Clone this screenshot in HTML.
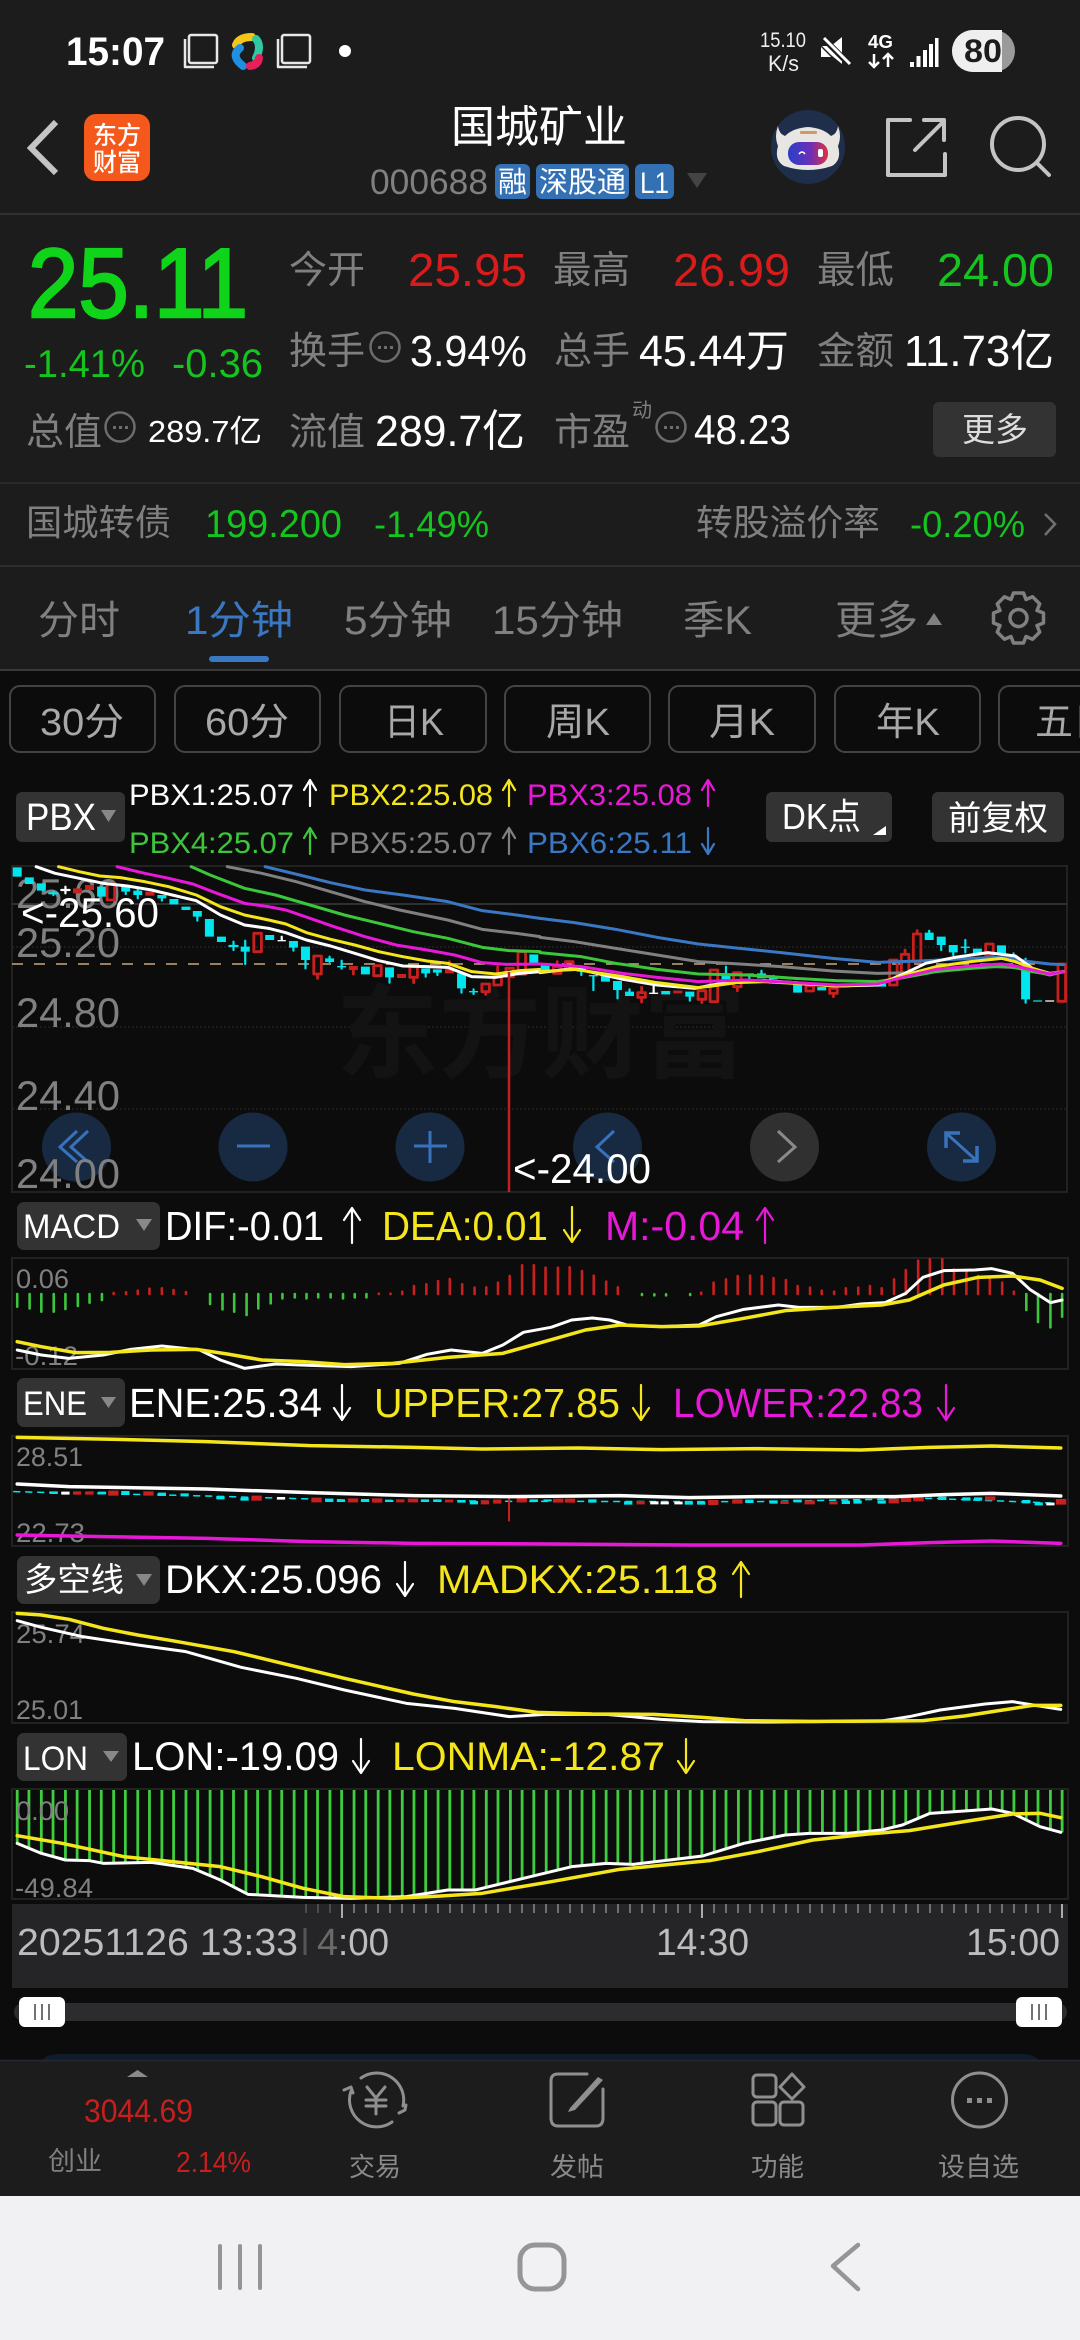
<!DOCTYPE html>
<html lang="zh"><head><meta charset="utf-8"><title>国城矿业</title>
<style>
html,body{margin:0;padding:0;background:#0c0c0c;width:1080px;height:2340px;overflow:hidden}
svg{display:block;font-family:"Liberation Sans","Noto Sans CJK SC",sans-serif}
text{white-space:pre}
.ns{vector-effect:non-scaling-stroke;fill:none;stroke-linejoin:round;stroke-linecap:round}
.a{fill:none;stroke-width:2.2;stroke-linecap:round;stroke-linejoin:round}
.ic{fill:none;stroke:#8f8f8f;stroke-width:3;stroke-linecap:round;stroke-linejoin:round}
</style></head><body>
<svg xmlns="http://www.w3.org/2000/svg" width="1080" height="2340" viewBox="0 0 1080 2340">
<defs><linearGradient id="vis" x1="0" x2="1"><stop offset="0" stop-color="#2a3fc8"/><stop offset=".55" stop-color="#6a2fb8"/><stop offset="1" stop-color="#e03040"/></linearGradient></defs>
<rect width="1080" height="670" fill="#1c1c1c"/>
<rect y="670" width="1080" height="1390" fill="#0c0c0c"/>
<!-- status bar -->
<text x="66" y="65" font-size="40" font-weight="700" fill="#fff" textLength="99" lengthAdjust="spacingAndGlyphs">15:07</text>
<g fill="none" stroke="#e8e8e8" stroke-width="2.500" stroke-linejoin="round"><rect x="189" y="35" width="28" height="28" rx="2"/><path d="M185 39V67H214"/><rect x="282" y="35" width="28" height="28" rx="2"/><path d="M278 39V67H307"/></g>
<g fill="none" stroke-width="8" stroke-linecap="round"><path d="M236 45Q239 37 252 37" stroke="#f5c518"/><path d="M256 39Q262 46 256 58" stroke="#2fc8a0"/><path d="M240 48Q230 56 243 66" stroke="#1f8fe0"/><path d="M250 66Q258 65 259 58" stroke="#e8205a"/></g>
<circle cx="345" cy="51" r="6" fill="#fff"/>
<text x="760" y="47" font-size="21" fill="#eee" textLength="46" lengthAdjust="spacingAndGlyphs">15.10</text>
<text x="768" y="71" font-size="22" fill="#eee" textLength="31" lengthAdjust="spacingAndGlyphs">K/s</text>
<path d="M822 46h9l11-9v27l-11-9z M821 47v10h10z" fill="#fff"/><path d="M824 39L849 64" stroke="#1c1c1c" stroke-width="6"/><path d="M824 38L850 64" stroke="#fff" stroke-width="3"/>
<text x="868" y="48" font-size="18" font-weight="700" fill="#fff" textLength="25" lengthAdjust="spacingAndGlyphs">4G</text>
<path d="M874 54V67M869 62L874 67L879 62M888 67V54M883 59L888 54L893 59" fill="none" stroke="#fff" stroke-width="2.500"/>
<path d="M910 62h4v5h-4zM916.500 56h4v11h-4zM923 50h4v17h-4zM929 44h4v23h-4zM935 38h3.500v29h-3.500z" fill="#fff"/>
<rect x="952" y="30" width="63" height="42" rx="21" fill="#9a9a9a"/><path d="M973 30H1002V72H973A21 21 0 0 1 973 30Z" fill="#efefef"/>
<text x="964" y="62" font-size="32" font-weight="700" fill="#1c1c1c" textLength="38" lengthAdjust="spacingAndGlyphs">80</text>
<!-- nav -->
<path d="M56 122L31 148L56 173" fill="none" stroke="#c4c4c4" stroke-width="6"/>
<rect x="84" y="114" width="66" height="67" rx="12" fill="#f4581a"/>
<text x="93" y="144" font-size="25" font-weight="500" fill="#fff" textLength="48" lengthAdjust="spacingAndGlyphs">东方</text>
<text x="93" y="171" font-size="25" font-weight="500" fill="#fff" textLength="48" lengthAdjust="spacingAndGlyphs">财富</text>
<text x="451" y="142" font-size="44" fill="#fff" textLength="176" lengthAdjust="spacingAndGlyphs">国城矿业</text>
<text x="370" y="194" font-size="35" fill="#808080" textLength="118" lengthAdjust="spacingAndGlyphs">000688</text>
<rect x="495" y="164" width="35" height="35" rx="6" fill="#3470b4"/><rect x="536" y="164" width="93" height="35" rx="6" fill="#3470b4"/><rect x="635" y="164" width="39" height="35" rx="6" fill="#3470b4"/>
<text x="498" y="192" font-size="29" fill="#fff" textLength="29" lengthAdjust="spacingAndGlyphs">融</text>
<text x="539" y="192" font-size="29" fill="#fff" textLength="87" lengthAdjust="spacingAndGlyphs">深股通</text>
<text x="640" y="193" font-size="30" fill="#fff" textLength="29" lengthAdjust="spacingAndGlyphs">L1</text>
<path d="M687 173H707L697 188Z" fill="#444"/>
<circle cx="808" cy="147" r="37" fill="#1f2e4a"/>
<path d="M778 126Q779 134 785 136Q793 128 808 127Q823 128 831 136Q837 134 838 126Q842 136 838 146Q842 160 832 166Q808 174 784 166Q774 160 778 146Q774 136 778 126Z" fill="#e8e6e2"/>
<rect x="788" y="142" width="40" height="23" rx="11" fill="url(#vis)"/><path d="M799 154q3-4 6 0" fill="none" stroke="#fff" stroke-width="1.500"/><rect x="818" y="149" width="5" height="8" rx="2" fill="#fff"/>
<rect x="800" y="131" width="17" height="3" rx="1" fill="#d09a60"/>
<path d="M910 120H888V175H945V154M915 150L943 122M924 120H944V140" fill="none" stroke="#c4c4c4" stroke-width="4" stroke-linecap="round" stroke-linejoin="round"/>
<circle cx="1018" cy="144" r="26" fill="none" stroke="#c4c4c4" stroke-width="4"/><path d="M1037 163L1049 175" stroke="#c4c4c4" stroke-width="4" stroke-linecap="round"/>
<path d="M0 214H1080" stroke="#303030" stroke-width="2"/>
<!-- quote -->
<text x="28" y="317" font-size="98" fill="#0fd41a" stroke="#0fd41a" stroke-width="2.500" textLength="220" lengthAdjust="spacingAndGlyphs">25.11</text>
<text x="24" y="377" font-size="39" fill="#15c41e" textLength="121" lengthAdjust="spacingAndGlyphs">-1.41%</text>
<text x="172" y="377" font-size="40" fill="#15c41e" textLength="91" lengthAdjust="spacingAndGlyphs">-0.36</text>
<g font-size="38" fill="#808080">
<text x="289" y="283" textLength="76" lengthAdjust="spacingAndGlyphs">今开</text><text x="553" y="283" textLength="77" lengthAdjust="spacingAndGlyphs">最高</text><text x="817" y="283" textLength="77" lengthAdjust="spacingAndGlyphs">最低</text>
<text x="289" y="364" textLength="76" lengthAdjust="spacingAndGlyphs">换手</text><text x="554" y="364" textLength="76" lengthAdjust="spacingAndGlyphs">总手</text><text x="817" y="364" textLength="77" lengthAdjust="spacingAndGlyphs">金额</text>
<text x="26" y="445" textLength="76" lengthAdjust="spacingAndGlyphs">总值</text><text x="289" y="445" textLength="76" lengthAdjust="spacingAndGlyphs">流值</text><text x="554" y="445" textLength="76" lengthAdjust="spacingAndGlyphs">市盈</text></g>
<g font-size="46"><text x="408" y="286" fill="#d81c1c" textLength="119" lengthAdjust="spacingAndGlyphs">25.95</text><text x="673" y="286" fill="#d81c1c" textLength="117" lengthAdjust="spacingAndGlyphs">26.99</text><text x="937" y="286" fill="#15c41e" textLength="117" lengthAdjust="spacingAndGlyphs">24.00</text></g>
<g font-size="44" fill="#fff"><text x="410" y="366" textLength="117" lengthAdjust="spacingAndGlyphs">3.94%</text><text x="639" y="366" textLength="150" lengthAdjust="spacingAndGlyphs">45.44万</text><text x="904" y="366" textLength="150" lengthAdjust="spacingAndGlyphs">11.73亿</text>
<text x="375" y="446" textLength="150" lengthAdjust="spacingAndGlyphs">289.7亿</text><text x="694" y="444" font-size="42" textLength="97" lengthAdjust="spacingAndGlyphs">48.23</text><text x="148" y="442" font-size="31" textLength="114" lengthAdjust="spacingAndGlyphs">289.7亿</text></g>
<g fill="none" stroke="#6c6c6c" stroke-width="2.500"><circle cx="385" cy="347" r="14.500"/><circle cx="120" cy="427" r="14.500"/><circle cx="671" cy="427" r="14.500"/></g>
<g fill="#6c6c6c"><path d="M378 346h3v3h-3zM384 346h3v3h-3zM390 346h3v3h-3zM113 426h3v3h-3zM119 426h3v3h-3zM125 426h3v3h-3zM664 426h3v3h-3zM670 426h3v3h-3zM676 426h3v3h-3z"/></g>
<text x="632" y="417" font-size="20" fill="#808080">动</text>
<rect x="933" y="402" width="123" height="55" rx="6" fill="#333"/>
<text x="962" y="441" font-size="33" fill="#ddd" textLength="66" lengthAdjust="spacingAndGlyphs">更多</text>
<path d="M0 483H1080" stroke="#2a2a2a" stroke-width="2"/>
<text x="26" y="535" font-size="36" fill="#808080" textLength="145" lengthAdjust="spacingAndGlyphs">国城转债</text>
<text x="205" y="537" font-size="39" fill="#15c41e" textLength="137" lengthAdjust="spacingAndGlyphs">199.200</text>
<text x="374" y="537" font-size="37" fill="#15c41e" textLength="115" lengthAdjust="spacingAndGlyphs">-1.49%</text>
<text x="696" y="535" font-size="36" fill="#808080" textLength="184" lengthAdjust="spacingAndGlyphs">转股溢价率</text>
<text x="910" y="537" font-size="37" fill="#15c41e" textLength="115" lengthAdjust="spacingAndGlyphs">-0.20%</text>
<path d="M1045 514L1055 524L1045 535" fill="none" stroke="#707070" stroke-width="2.500"/>
<path d="M0 566H1080" stroke="#2e2e2e" stroke-width="2"/>
<!-- tabs -->
<g font-size="40" fill="#808080"><text x="38" y="634" textLength="82" lengthAdjust="spacingAndGlyphs">分时</text>
<text x="185" y="634" fill="#3a78c4" textLength="108" lengthAdjust="spacingAndGlyphs">1分钟</text>
<text x="344" y="634" textLength="108" lengthAdjust="spacingAndGlyphs">5分钟</text><text x="492" y="634" textLength="131" lengthAdjust="spacingAndGlyphs">15分钟</text><text x="683" y="634" textLength="69" lengthAdjust="spacingAndGlyphs">季K</text><text x="835" y="634" textLength="83" lengthAdjust="spacingAndGlyphs">更多</text></g>
<path d="M926 625L934 613L942 625Z" fill="#808080"/>
<g transform="translate(1018.500 618)"><path d="M-5-25L5-25L7.500-18.500L14.100-21.200L21.200-14.100L18.500-7.500L25-5L25 5L18.500 7.500L21.200 14.100L14.100 21.200L7.500 18.500L5 25L-5 25L-7.500 18.500L-14.100 21.200L-21.200 14.100L-18.500 7.500L-25 5L-25-5L-18.500-7.500L-21.200-14.100L-14.100-21.200L-7.500-18.500Z" fill="none" stroke="#808080" stroke-width="3.500" stroke-linejoin="round"/><circle r="8.500" fill="none" stroke="#808080" stroke-width="3.500"/></g>
<rect x="209" y="656" width="60" height="6" rx="3" fill="#3a78c4"/>
<path d="M0 670H1080" stroke="#3a3a3a" stroke-width="2"/>
<!-- period buttons -->
<g fill="none" stroke="#444" stroke-width="2"><rect x="10" y="686" width="145" height="66" rx="10"/><rect x="175" y="686" width="145" height="66" rx="10"/><rect x="340" y="686" width="146" height="66" rx="10"/><rect x="505" y="686" width="145" height="66" rx="10"/><rect x="669" y="686" width="146" height="66" rx="10"/><rect x="835" y="686" width="145" height="66" rx="10"/><rect x="999" y="686" width="146" height="66" rx="10"/></g>
<g font-size="38" fill="#a8a8a8"><text x="40" y="735" textLength="84" lengthAdjust="spacingAndGlyphs">30分</text><text x="205" y="735" textLength="84" lengthAdjust="spacingAndGlyphs">60分</text><text x="384" y="735" textLength="60" lengthAdjust="spacingAndGlyphs">日K</text><text x="546" y="735" textLength="64" lengthAdjust="spacingAndGlyphs">周K</text><text x="709" y="735" textLength="66" lengthAdjust="spacingAndGlyphs">月K</text><text x="876" y="735" textLength="64" lengthAdjust="spacingAndGlyphs">年K</text><text x="1035" y="735">五日</text></g>
<!-- PBX header -->
<rect x="16" y="792" width="109" height="50" rx="6" fill="#333"/>
<text x="26" y="830" font-size="38" fill="#fff" textLength="70" lengthAdjust="spacingAndGlyphs">PBX</text>
<path d="M101 810H116L108.500 822Z" fill="#888"/>
<g font-size="30"><text x="129" y="805" fill="#fff" textLength="165" lengthAdjust="spacingAndGlyphs">PBX1:25.07</text><text x="329" y="805" fill="#f5e61c" textLength="164" lengthAdjust="spacingAndGlyphs">PBX2:25.08</text><text x="527" y="805" fill="#e818d8" textLength="165" lengthAdjust="spacingAndGlyphs">PBX3:25.08</text>
<text x="129" y="853" fill="#3cc63c" textLength="165" lengthAdjust="spacingAndGlyphs">PBX4:25.07</text><text x="329" y="853" fill="#808080" textLength="164" lengthAdjust="spacingAndGlyphs">PBX5:25.07</text><text x="527" y="853" fill="#3a78c4" textLength="165" lengthAdjust="spacingAndGlyphs">PBX6:25.11</text></g>
<path class="a" stroke="#fff" d="M310 806V780M304 790L310 780L316 790"/><path class="a" stroke="#f5e61c" d="M509 806V780M503 790L509 780L515 790"/><path class="a" stroke="#e818d8" d="M708 806V780M702 790L708 780L714 790"/>
<path class="a" stroke="#3cc63c" d="M310 854V828M304 838L310 828L316 838"/><path class="a" stroke="#808080" d="M509 854V828M503 838L509 828L515 838"/><path class="a" stroke="#3a78c4" d="M708 828V854M702 844L708 854L714 844"/>
<rect x="766" y="792" width="126" height="50" rx="6" fill="#333"/><text x="782" y="829" font-size="36" fill="#fff" textLength="79" lengthAdjust="spacingAndGlyphs">DK点</text><path d="M886 826V835H873Z" fill="#fff"/>
<rect x="932" y="792" width="132" height="50" rx="6" fill="#333"/><text x="948" y="830" font-size="34" fill="#fff" textLength="100" lengthAdjust="spacingAndGlyphs">前复权</text>
<!-- main chart -->
<rect x="12" y="866" width="1055" height="326" fill="none" stroke="#222" stroke-width="2"/>
<path d="M12 904H1067" stroke="#303030" stroke-width="2"/>
<path d="M12 947H1067M12 1027H1067M12 1109H1067" stroke="#2c2c2c" stroke-width="1" stroke-dasharray="2 2"/>
<path d="M12 964H1067" stroke="#c8a67c" stroke-width="1.500" stroke-dasharray="11 11"/>
<text x="336" y="1070" font-size="102" font-weight="700" fill="#131313" textLength="410" lengthAdjust="spacingAndGlyphs">东方财富</text>
<g font-size="42" fill="#808080"><text x="16" y="908" textLength="104" lengthAdjust="spacingAndGlyphs">25.60</text><text x="16" y="957" textLength="104" lengthAdjust="spacingAndGlyphs">25.20</text><text x="16" y="1027" textLength="104" lengthAdjust="spacingAndGlyphs">24.80</text><text x="16" y="1110" textLength="104" lengthAdjust="spacingAndGlyphs">24.40</text></g>
<g transform="matrix(.3444 0 0 .33333 0 860)">
<path fill="#00e6ee" d="M37 22h26v28h-26zM72 52h26v20h-26zM107 70h26v22h-26zM282 80h26v30h-26zM352 80h26v15h-26zM387 92h26v13h-26zM457 105h26v10h-26zM492 117h26v16h-26zM527 140h26v10h-26zM560 153h26v17h-26zM595 177h26v53h-26zM630 230h26v16h-26zM699 260h26v15h-26zM770 225h26v15h-26zM839 243h26v20h-26zM874 260h26v40h-26zM944 295h26v11h-26zM979 318h26v4h-26zM1048 320h26v23h-26zM1118 322h26v30h-26zM1223 325h26v15h-26zM1257 328h26v10h-26zM1327 340h26v45h-26zM1362 393h26v4h-26zM1537 283h26v32h-26z"/>
<path class="ns" stroke="#00e6ee" stroke-width="2.200" d="M155 95V105M143 100h24M365 95V102M400 85V115M470 115V122M573 170V182M678 245V270M666 258h24M712 242V312M852 263V272M887 300V325M957 290V306M992 302V326M1131 352V368M1236 340V350M1270 338V345M1340 385V398M1375 388V402"/>
<path fill="#c8201f" d="M212 85h26v15h-26zM247 75h26v15h-26zM422 95h26v12h-26zM1013 318h26v12h-26zM1153 342h26v12h-26zM1292 322h26v18h-26z"/>
<path class="ns" stroke="#c8201f" stroke-width="2.800" d="M311 72h22v48h-22zM737 220h22v55h-22zM911 288h22v54h-22zM922 342V355M1026 330V342M1305 305V322M1085 317h22v30h-22zM1190 320h22v32h-22zM1201 352V368M1399 372h22v23h-22zM1410 395V403M1434 350h22v25h-22zM1445 320V350M1469 325h22v25h-22zM1504 275h22v68h-22z"/>
<path class="ns" stroke="#fff" stroke-width="2.200" d="M178 90h24M190 80V100M818 230V240"/><path fill="#fff" d="M806 240h24v4h-24z"/>
<polyline class="ns" stroke="#3a78c4" stroke-width="3" points="770,20 870,45 960,68 1060,90 1170,105 1300,125 1400,152 1500,165 1568,175"/>
<polyline class="ns" stroke="#808080" stroke-width="3" points="660,20 760,40 860,65 960,95 1060,125 1160,150 1300,180 1400,208 1500,220 1568,230"/>
<polyline class="ns" stroke="#3cc63c" stroke-width="3" points="555,20 610,45 710,85 800,105 900,135 1000,165 1100,190 1200,215 1300,235 1400,262 1480,272 1568,275"/>
<polyline class="ns" stroke="#e818d8" stroke-width="3" points="340,20 420,40 490,55 560,72 630,100 710,130 780,140 830,150 900,175 970,200 1060,230 1150,255 1240,270 1320,285 1400,308 1470,313 1568,312"/>
<polyline class="ns" stroke="#f5e61c" stroke-width="3" points="170,20 230,35 290,48 350,53 420,65 490,80 570,105 640,140 710,165 780,180 830,192 890,218 960,238 1030,255 1100,275 1170,290 1240,303 1300,310 1370,335 1440,342 1510,332 1568,328"/>
<polyline class="ns" stroke="#fff" stroke-width="3" points="105,20 160,40 230,55 300,70 370,78 440,90 500,105 570,122 640,165 710,195 780,205 830,218 890,240 960,258 1030,280 1100,302 1170,318 1240,320 1300,322 1370,350 1440,352 1510,340 1568,335"/>
</g>
<g transform="matrix(.3444 0 0 .33333 540 860)">
<path fill="#00e6ee" d="M2 310h26v20h-26zM107 320h26v15h-26zM142 345h26v4h-26zM177 345h26v20h-26zM212 363h26v27h-26zM247 395h26v13h-26zM352 393h26v10h-26zM422 395h26v15h-26zM527 342h26v16h-26zM595 340h26v5h-26zM630 340h26v15h-26zM665 353h26v5h-26zM735 373h26v25h-26zM805 381h26v10h-26zM979 370h26v10h-26zM1117 218h26v22h-26zM1152 230h26v25h-26zM1187 255h26v22h-26zM1222 260h26v4h-26zM1257 266h26v19h-26zM1327 256h26v26h-26zM1362 290h26v15h-26zM1397 330h26v88h-26zM1432 421h26v4h-26z"/>
<path class="ns" stroke="#00e6ee" stroke-width="2.200" d="M120 335V345M155 349V390M225 390V415M260 388V395M435 410V422M540 320V342M608 345V355M643 332V340M678 348V353M1130 212V218M1165 255V270M1200 277V285M1235 240V277M1375 280V290M1410 296V330M1410 418V428"/>
<path fill="#c8201f" d="M387 392h26v8h-26zM700 365h26v5h-26zM874 370h26v13h-26zM944 370h26v8h-26z"/>
<path class="ns" stroke="#c8201f" stroke-width="2.800" d="M39 320h22v20h-22zM50 305V320M74 305h22v25h-22zM284 398h22v14h-22zM295 382V398M295 412V426M459 392h22v26h-22zM470 418V428M494 330h22v95h-22zM562 338h22v42h-22zM573 380V392M772 378h22v15h-22zM841 385h22v15h-22zM852 400V410M1015 300h22v75h-22zM1049 283h22v62h-22zM1060 270V283M1084 222h22v83h-22zM1095 212V222M1294 252h22v33h-22zM1504 312h22v112h-22z"/>
<path class="ns" stroke="#fff" stroke-width="2.200" d="M330 375V398"/><path fill="#fff" d="M317 398h26v4h-26zM1467 421h26v4h-26z"/>
<polyline class="ns" stroke="#3a78c4" stroke-width="3" points="0,175 100,188 220,208 340,232 460,252 580,265 700,278 850,295 980,307 1100,303 1200,298 1320,292 1370,295 1420,305 1480,312 1520,314"/>
<polyline class="ns" stroke="#808080" stroke-width="3" points="0,232 100,245 220,265 340,285 460,305 580,312 700,320 850,333 980,340 1100,338 1200,328 1320,320 1370,322 1420,330 1480,345 1520,335"/>
<polyline class="ns" stroke="#3cc63c" stroke-width="3" points="0,278 120,290 220,310 340,328 460,342 600,345 740,355 860,362 980,365 1060,352 1150,335 1250,325 1340,318 1380,322 1430,335 1480,343 1520,335"/>
<polyline class="ns" stroke="#fff" stroke-width="3" points="0,338 100,325 240,358 340,375 450,385 500,375 570,365 650,362 740,368 860,378 980,375 1060,340 1120,310 1200,293 1300,278 1380,288 1430,325 1480,342 1520,335"/>
<polyline class="ns" stroke="#f5e61c" stroke-width="3" points="0,335 100,328 240,350 340,368 460,383 500,378 570,368 650,365 740,370 860,378 980,372 1060,345 1150,320 1250,305 1340,295 1380,305 1430,325 1480,340 1520,335"/>
<polyline class="ns" stroke="#e818d8" stroke-width="3" points="0,312 120,320 240,340 340,352 460,365 600,360 740,368 860,375 980,372 1060,350 1150,328 1250,318 1340,312 1380,318 1430,330 1480,342 1520,335"/>
</g>
<path d="M509 972V1192" stroke="#c02020" stroke-width="2.500"/>
<text x="21" y="927" font-size="42" fill="#fff" textLength="138" lengthAdjust="spacingAndGlyphs">&lt;-25.60</text>
<g fill="#172a42"><circle cx="76.500" cy="1147" r="34.500"/><circle cx="253" cy="1147" r="34.500"/><circle cx="430" cy="1147" r="34.500"/><circle cx="607.500" cy="1147" r="34.500"/><circle cx="961.500" cy="1147" r="34.500"/></g><circle cx="784.500" cy="1147" r="34.500" fill="#303030"/>
<g fill="none" stroke="#3872bd" stroke-width="3"><path d="M77 1131L60 1147L77 1162M88 1131L71 1147L88 1162"/><path d="M237 1146H270"/><path d="M414 1146H447M430 1131V1163"/><path d="M614 1131L597 1147L614 1162"/><path d="M946 1133L977 1161"/><path d="M946 1148V1133H960M977 1146V1161H963" stroke-width="3.500"/></g>
<path d="M778 1131L795 1147L778 1162" fill="none" stroke="#8a8a8a" stroke-width="3"/>
<text x="16" y="1188" font-size="42" fill="#808080" textLength="104" lengthAdjust="spacingAndGlyphs">24.00</text>
<text x="513" y="1183" font-size="42" fill="#fff" textLength="138" lengthAdjust="spacingAndGlyphs">&lt;-24.00</text>
<!-- MACD -->
<rect x="17" y="1202" width="143" height="48" rx="7" fill="#333"/><text x="23" y="1238" font-size="34" fill="#fff" textLength="97" lengthAdjust="spacingAndGlyphs">MACD</text><path d="M136 1219H152L144 1231Z" fill="#888"/>
<g font-size="41"><text x="165" y="1240" fill="#fff" textLength="159" lengthAdjust="spacingAndGlyphs">DIF:-0.01</text><text x="382" y="1240" fill="#f5e61c" textLength="166" lengthAdjust="spacingAndGlyphs">DEA:0.01</text><text x="605" y="1240" fill="#e818d8" textLength="139" lengthAdjust="spacingAndGlyphs">M:-0.04</text></g>
<path class="a" stroke="#fff" d="M352 1243V1208M344 1220L352 1208L360 1220"/><path class="a" stroke="#f5e61c" d="M572 1207V1242M564 1230L572 1242L580 1230"/><path class="a" stroke="#e818d8" d="M765 1243V1208M757 1220L765 1208L773 1220"/>
<rect x="12" y="1258" width="1056" height="111" fill="none" stroke="#222" stroke-width="2"/>
<text x="16" y="1288" font-size="27" fill="#808080" textLength="53" lengthAdjust="spacingAndGlyphs">0.06</text>
<text x="15" y="1365" font-size="27" fill="#808080" textLength="63" lengthAdjust="spacingAndGlyphs">-0.12</text>
<g transform="matrix(.6888 0 0 .33333 0 1190)">
<path class="ns" stroke="#3cc63c" stroke-width="2.600" d="M25 312V350M43 312V355M60 312V365M78 312V365M95 312V357M113 312V348M130 312V338M148 312V330M305 312V342M323 312V358M340 312V365M358 312V375M375 312V355M393 312V340M410 312V325M428 312V322M445 312V325M462 312V322M480 312V322M498 312V325M515 312V322M532 312V322M932 312V315M950 313V316M967 313V316M1002 312V315M1490 312V360M1507 312V396M1525 312V412M1542 312V380"/>
<path class="ns" stroke="#c8201f" stroke-width="2.600" d="M165 312V309M183 312V307M200 312V302M217 312V296M235 312V295M252 312V300M270 312V306M550 312V311M567 312V311M584 312V305M601 312V288M619 312V283M636 312V273M653 312V267M671 312V283M689 312V293M706 312V292M723 312V278M740 312V258M758 312V226M775 312V226M792 312V233M810 312V233M827 312V232M845 312V243M862 312V257M880 312V275M897 312V292M1018 312V308M1036 312V278M1054 312V268M1071 312V258M1089 312V257M1106 312V258M1123 312V264M1141 312V270M1158 312V288M1176 312V293M1193 312V302M1211 312V305M1228 312V295M1246 312V293M1263 312V288M1280 312V295M1298 312V268M1315 312V240M1333 312V212M1350 312V208M1368 312V208M1385 312V238M1403 312V240M1420 312V258M1437 312V262M1455 312V278M1472 312V305"/>
<polyline class="ns" stroke="#fff" stroke-width="3" points="25,480 60,495 100,505 150,495 190,478 235,468 290,480 320,510 355,535 400,522 450,526 510,530 580,520 620,493 655,480 700,490 730,465 760,427 800,412 830,390 860,384 885,390 910,405 960,410 1015,405 1040,380 1080,358 1130,345 1160,352 1215,352 1250,342 1285,338 1315,310 1340,262 1370,242 1415,240 1440,236 1470,250 1495,298 1525,338 1542,330"/>
<polyline class="ns" stroke="#f5e61c" stroke-width="3.500" points="25,455 60,470 110,488 160,487 220,480 285,478 330,492 380,510 440,515 500,524 570,520 650,502 730,490 790,455 850,420 900,405 960,410 1015,408 1080,385 1140,362 1210,352 1280,345 1320,330 1370,285 1420,262 1470,258 1510,270 1542,295"/>
</g>
<!-- ENE -->
<rect x="17" y="1378" width="108" height="49" rx="7" fill="#333"/><text x="23" y="1415" font-size="34" fill="#fff" textLength="64" lengthAdjust="spacingAndGlyphs">ENE</text><path d="M101 1397H116L108.500 1408Z" fill="#888"/>
<g font-size="41"><text x="129" y="1417" fill="#fff" textLength="193" lengthAdjust="spacingAndGlyphs">ENE:25.34</text><text x="374" y="1417" fill="#f5e61c" textLength="246" lengthAdjust="spacingAndGlyphs">UPPER:27.85</text><text x="673" y="1417" fill="#e818d8" textLength="250" lengthAdjust="spacingAndGlyphs">LOWER:22.83</text></g>
<path class="a" stroke="#fff" d="M342 1385V1420M334 1408L342 1420L350 1408"/><path class="a" stroke="#f5e61c" d="M641 1385V1420M633 1408L641 1420L649 1408"/><path class="a" stroke="#e818d8" d="M946 1385V1420M938 1408L946 1420L954 1408"/>
<rect x="12" y="1436" width="1056" height="110" fill="none" stroke="#222" stroke-width="2"/>
<text x="16" y="1466" font-size="27" fill="#808080" textLength="67" lengthAdjust="spacingAndGlyphs">28.51</text>
<text x="16" y="1542" font-size="27" fill="#808080" textLength="69" lengthAdjust="spacingAndGlyphs">22.73</text>
<g transform="matrix(.6888 0 0 .33333 0 1190)">
<path class="ns" stroke="#00e6ee" stroke-width="1.500" stroke-dasharray="6 6" d="M20 905L300 918L500 930L740 934L1100 935L1350 925L1540 940"/>
<path fill="#00e6ee" d="M72 904h12v8h-12zM142 905h12v8h-12zM176 903h12v12h-12zM229 908h12v10h-12zM262 910h12v9h-12zM314 918h12v10h-12zM349 923h12v9h-12zM472 926h12v10h-12zM489 928h12v8h-12zM524 927h12v9h-12zM559 930h12v6h-12zM611 928h12v8h-12zM629 928h12v8h-12zM664 930h12v8h-12zM682 933h12v10h-12zM769 928h12v8h-12zM789 928h12v6h-12zM854 928h12v10h-12zM906 934h12v10h-12zM994 934h12v10h-12zM1012 934h12v10h-12zM1082 929h12v10h-12zM1117 931h12v10h-12zM1152 929h12v8h-12zM1222 932h12v10h-12zM1239 931h12v10h-12zM1274 931h12v10h-12zM1362 920h12v10h-12zM1397 922h12v10h-12zM1414 922h12v10h-12zM1484 930h12v10h-12zM1502 937h12v9h-12z"/>
<path fill="#c8201f" d="M106 904h12v10h-12zM124 904h12v10h-12zM157 902h15v15h-15zM208 904h15v13h-15zM365 917h15v15h-15zM452 923h15v14h-15zM505 925h15v12h-15zM540 925h15v13h-15zM575 928h12v9h-12zM592 926h15v11h-15zM646 929h12v8h-12zM698 931h12v12h-12zM716 929h12v12h-12zM750 924h15v13h-15zM803 926h15v12h-15zM820 926h15v12h-15zM924 933h12v10h-12zM1028 930h15v15h-15zM1063 928h15v13h-15zM1133 933h12v9h-12zM1168 931h15v12h-15zM1204 934h12v9h-12zM1290 926h15v14h-15zM1308 923h15v13h-15zM1326 916h15v18h-15zM1430 919h15v12h-15zM1533 927h15v17h-15z"/>
<path fill="#fff" d="M89 905h12v9h-12zM402 921h12v8h-12zM944 934h12v9h-12zM959 935h12v8h-12zM979 935h12v8h-12zM1519 938h12v8h-12z"/>
<path class="ns" stroke="#c8201f" stroke-width="2" d="M739 925V992"/>
<polyline class="ns" stroke="#f5e61c" stroke-width="3.500" points="25,742 170,748 300,755 450,767 600,772 700,777 840,774 960,779 1100,776 1250,780 1350,772 1440,768 1540,774"/>
<polyline class="ns" stroke="#fff" stroke-width="3.500" points="25,882 100,890 300,897 450,908 600,917 740,920 900,917 1000,923 1100,920 1300,920 1370,914 1440,910 1540,918"/>
<polyline class="ns" stroke="#e818d8" stroke-width="3.500" points="25,1035 150,1040 300,1045 450,1055 600,1060 800,1062 1000,1065 1250,1065 1350,1058 1440,1053 1540,1060"/>
</g>
<!-- DKX -->
<rect x="17" y="1556" width="143" height="48" rx="7" fill="#333"/><text x="24" y="1591" font-size="33" fill="#fff" textLength="100" lengthAdjust="spacingAndGlyphs">多空线</text><path d="M136 1574H152L144 1586Z" fill="#888"/>
<g font-size="40"><text x="165" y="1593" fill="#fff" textLength="217" lengthAdjust="spacingAndGlyphs">DKX:25.096</text><text x="437" y="1593" fill="#f5e61c" textLength="281" lengthAdjust="spacingAndGlyphs">MADKX:25.118</text></g>
<path class="a" stroke="#fff" d="M405 1562V1596M397 1584L405 1596L413 1584"/><path class="a" stroke="#f5e61c" d="M741 1597V1562M733 1574L741 1562L749 1574"/>
<rect x="12" y="1612" width="1056" height="111" fill="none" stroke="#222" stroke-width="2"/>
<text x="16" y="1643" font-size="27" fill="#808080" textLength="69" lengthAdjust="spacingAndGlyphs">25.74</text>
<text x="16" y="1719" font-size="27" fill="#808080" textLength="67" lengthAdjust="spacingAndGlyphs">25.01</text>
<g transform="matrix(.6888 0 0 .33333 0 1550)">
<polyline class="ns" stroke="#fff" stroke-width="3" points="25,212 60,232 120,260 200,285 270,305 350,352 430,385 500,420 590,460 660,475 740,500 790,493 880,493 960,508 1020,515 1120,516 1280,513 1320,500 1365,480 1430,462 1470,455 1500,465 1540,478"/>
<polyline class="ns" stroke="#f5e61c" stroke-width="3.500" points="25,190 60,195 100,208 150,235 200,255 250,272 340,305 400,335 500,385 600,432 660,455 720,470 780,487 860,492 950,493 1020,502 1080,512 1180,514 1280,513 1340,512 1400,498 1450,482 1500,466 1540,466"/>
</g>
<!-- LON -->
<rect x="17" y="1733" width="110" height="48" rx="7" fill="#333"/><text x="23" y="1770" font-size="34" fill="#fff" textLength="65" lengthAdjust="spacingAndGlyphs">LON</text><path d="M103 1751H119L111 1762Z" fill="#888"/>
<g font-size="40"><text x="132" y="1770" fill="#fff" textLength="207" lengthAdjust="spacingAndGlyphs">LON:-19.09</text><text x="392" y="1770" fill="#f5e61c" textLength="273" lengthAdjust="spacingAndGlyphs">LONMA:-12.87</text></g>
<path class="a" stroke="#fff" d="M361 1739V1773M353 1761L361 1773L369 1761"/><path class="a" stroke="#f5e61c" d="M686 1739V1773M678 1761L686 1773L694 1761"/>
<rect x="12" y="1789" width="1056" height="110" fill="none" stroke="#222" stroke-width="2"/>
<g transform="matrix(.6888 0 0 .33333 0 1550)">
<path class="ns" stroke="#3fcc3f" stroke-width="2.800" style="stroke-linecap:butt" d="M25 720V880M42 720V895M60 720V910M77 720V920M95 720V930M112 720V931M130 720V932M147 720V938M165 720V940M182 720V939M200 720V938M217 720V937M235 720V941M252 720V945M270 720V951M287 720V961M305 720V977M322 720V992M339 720V1011M357 720V1030M374 720V1035M392 720V1037M409 720V1038M427 720V1040M444 720V1042M461 720V1043M479 720V1044M496 720V1045M514 720V1045M531 720V1044M549 720V1043M566 720V1042M584 720V1040M601 720V1037M618 720V1031M636 720V1024M653 720V1020M671 720V1020M688 720V1020M706 720V1012M723 720V1003M741 720V994M758 720V986M775 720V977M793 720V968M810 720V959M828 720V951M845 720V947M862 720V944M880 720V940M897 720V941M915 720V943M932 720V940M950 720V936M967 720V932M985 720V927M1002 720V923M1019 720V918M1037 720V907M1054 720V896M1072 720V885M1089 720V876M1106 720V869M1124 720V862M1141 720V855M1159 720V852M1176 720V850M1194 720V850M1211 720V850M1228 720V847M1246 720V843M1263 720V840M1281 720V840M1298 720V831M1315 720V820M1333 720V805M1350 720V790M1368 720V787M1385 720V785M1403 720V783M1420 720V780M1438 720V777M1455 720V783M1472 720V792M1490 720V810M1507 720V827M1525 720V840M1542 720V847"/>
<polyline class="ns" stroke="#fff" stroke-width="3" points="25,880 60,910 95,930 130,932 150,940 220,937 280,955 320,990 360,1033 440,1042 510,1045 590,1040 650,1020 690,1020 760,985 830,950 880,940 920,943 1020,918 1080,880 1140,855 1175,850 1230,850 1280,840 1310,825 1350,790 1400,783 1440,777 1470,790 1510,830 1540,847"/>
<polyline class="ns" stroke="#f5e61c" stroke-width="3.500" points="25,857 90,880 180,920 250,935 320,950 380,980 440,1015 500,1040 570,1045 640,1038 700,1030 800,995 900,958 1030,932 1100,905 1180,870 1260,852 1320,842 1400,815 1470,792 1510,790 1540,803"/>
</g>
<text x="16" y="1820" font-size="27" fill="#808080" textLength="53" lengthAdjust="spacingAndGlyphs">0.00</text>
<text x="15" y="1897" font-size="27" fill="#808080" textLength="78" lengthAdjust="spacingAndGlyphs">-49.84</text>
<!-- time axis -->
<rect x="12" y="1904" width="1056" height="84" fill="#252527"/>
<path d="M306 1904V1913M318 1904V1913M330 1904V1913" stroke="#5a5a5a" stroke-width="1.500"/>
<path d="M354 1904V1913M366 1904V1913M378 1904V1913M390 1904V1913M402 1904V1913M414 1904V1913M426 1904V1913M438 1904V1913M450 1904V1913M462 1904V1913M474 1904V1913M486 1904V1913M498 1904V1913M510 1904V1913M522 1904V1913M534 1904V1913M546 1904V1913M558 1904V1913M570 1904V1913M582 1904V1913M594 1904V1913M606 1904V1913M618 1904V1913M630 1904V1913M642 1904V1913M654 1904V1913M666 1904V1913M678 1904V1913M690 1904V1913M714 1904V1913M726 1904V1913M738 1904V1913M750 1904V1913M762 1904V1913M774 1904V1913M786 1904V1913M798 1904V1913M810 1904V1913M822 1904V1913M834 1904V1913M846 1904V1913M858 1904V1913M870 1904V1913M882 1904V1913M894 1904V1913M906 1904V1913M918 1904V1913M930 1904V1913M942 1904V1913M954 1904V1913M966 1904V1913M978 1904V1913M990 1904V1913M1002 1904V1913M1014 1904V1913M1026 1904V1913M1038 1904V1913M1050 1904V1913" stroke="#8a8a8a" stroke-width="1.500"/>
<path d="M342 1904V1918M702 1904V1918M1062 1904V1918" stroke="#aaa" stroke-width="2"/>
<g font-size="38" fill="#bdbdbd"><text x="17" y="1955" textLength="281" lengthAdjust="spacingAndGlyphs">20251126 13:33</text><text x="317" y="1955" fill="#6a6a6a" textLength="21" lengthAdjust="spacingAndGlyphs">4</text><text x="338" y="1955" textLength="51" lengthAdjust="spacingAndGlyphs">:00</text><text x="656" y="1955" textLength="93" lengthAdjust="spacingAndGlyphs">14:30</text><text x="966" y="1955" textLength="94" lengthAdjust="spacingAndGlyphs">15:00</text></g>
<path d="M305 1928V1955" stroke="#555" stroke-width="3"/>
<!-- slider -->
<rect x="14" y="2003" width="1053" height="18" rx="9" fill="#2c2c2e"/>
<rect x="19" y="1997" width="46" height="30" rx="6" fill="#fff"/><rect x="1016" y="1997" width="46" height="30" rx="6" fill="#fff"/>
<path d="M35 2004V2020M42 2004V2020M49 2004V2020M1032 2004V2020M1039 2004V2020M1046 2004V2020" stroke="#444" stroke-width="1.500"/>
<path d="M41 2060V2066Q41 2054 60 2054H1020Q1040 2054 1040 2066V2060Z" fill="#101b2b"/>
<!-- bottom bar -->
<rect y="2060" width="1080" height="136" fill="#1c1c1c"/><path d="M0 2060.500H1080" stroke="#262a30" stroke-width="1.500"/>
<path d="M127 2077L137.500 2070L148 2077Z" fill="#8a8a8a"/>
<text x="84" y="2122" font-size="32" fill="#c81e1e" textLength="109" lengthAdjust="spacingAndGlyphs">3044.69</text>
<text x="48" y="2170" font-size="26" fill="#808080" textLength="54" lengthAdjust="spacingAndGlyphs">创业</text>
<text x="176" y="2172" font-size="29" fill="#c81e1e" textLength="75" lengthAdjust="spacingAndGlyphs">2.14%</text>
<g font-size="26" fill="#8a8a8a"><text x="349" y="2176" textLength="52" lengthAdjust="spacingAndGlyphs">交易</text><text x="550" y="2176" textLength="54" lengthAdjust="spacingAndGlyphs">发帖</text><text x="751" y="2176" textLength="53" lengthAdjust="spacingAndGlyphs">功能</text><text x="938" y="2176" textLength="81" lengthAdjust="spacingAndGlyphs">设自选</text></g>
<path class="ic" d="M361 2078A27 27 0 0 1 403 2106M392 2122A27 27 0 0 1 351 2091M344 2090L351 2087L353 2093M399 2113L405 2110L406 2105M367 2087L376 2098L385 2087M366 2100H386M366 2106H386M376 2098V2114"/>
<path class="ic" d="M587 2074H558Q551 2074 551 2081V2118Q551 2126 558 2126H596Q603 2126 603 2118V2089"/>
<path d="M570 2108L598 2077L603 2080L603 2080L575 2110L568 2112Z" fill="#8f8f8f"/>
<g class="ic"><rect x="753" y="2075" width="23" height="22" rx="4"/><rect x="753" y="2102" width="23" height="23" rx="4"/><rect x="780" y="2102" width="23" height="23" rx="4"/><path d="M792 2074L804 2087L792 2099L780 2087Z"/></g>
<circle class="ic" cx="979.500" cy="2100" r="27"/><path d="M967 2098h5v5h-5zM977 2098h5v5h-5zM987 2098h5v5h-5z" fill="#8f8f8f"/>
<!-- nav bar -->
<rect y="2196" width="1080" height="144" fill="#f1f1f3"/>
<path d="M220 2246V2288M240 2246V2288M260 2246V2288" stroke="#959595" stroke-width="4" stroke-linecap="round"/>
<rect x="520" y="2245" width="44" height="44" rx="15" fill="none" stroke="#959595" stroke-width="5"/>
<path d="M858 2245L833 2266L858 2289" fill="none" stroke="#959595" stroke-width="4.500" stroke-linecap="round" stroke-linejoin="round"/>
</svg>
</body></html>
